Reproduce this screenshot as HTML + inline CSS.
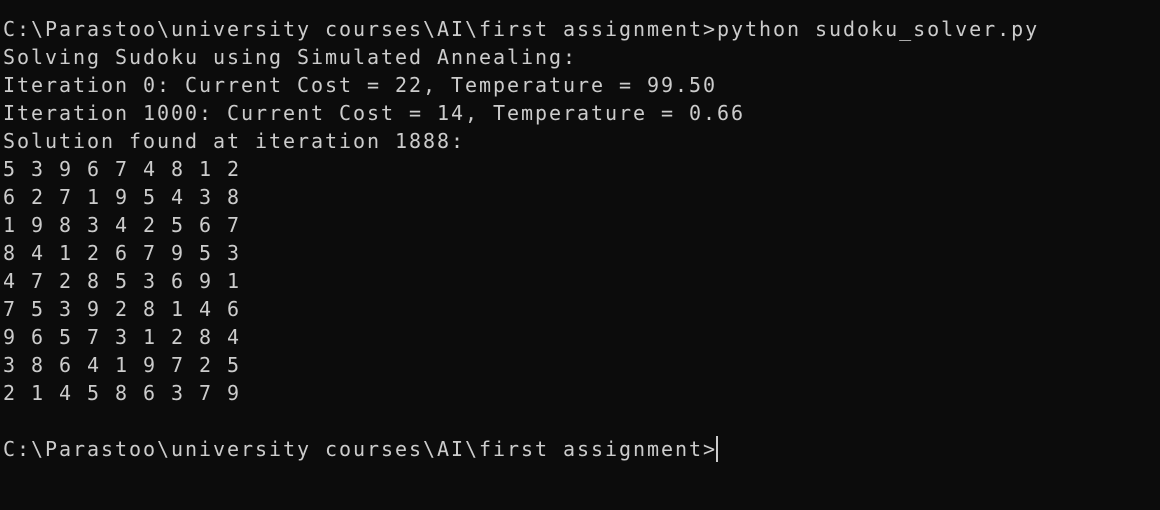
<!DOCTYPE html>
<html><head><meta charset="utf-8"><style>
html,body{margin:0;padding:0;background:#0c0c0c;width:1160px;height:510px;overflow:hidden}
pre{margin:0;padding:15px 0 0 3px;font-family:"DejaVu Sans Mono",monospace;font-size:20px;letter-spacing:1.96px;line-height:28px;color:#cccccc}
.cur{display:inline-block;width:2px;height:26px;background:#cccccc;vertical-align:-6px;margin-left:-1px}
</style></head><body><pre>C:\Parastoo\university courses\AI\first assignment>python sudoku_solver.py
Solving Sudoku using Simulated Annealing:
Iteration 0: Current Cost = 22, Temperature = 99.50
Iteration 1000: Current Cost = 14, Temperature = 0.66
Solution found at iteration 1888:
5 3 9 6 7 4 8 1 2
6 2 7 1 9 5 4 3 8
1 9 8 3 4 2 5 6 7
8 4 1 2 6 7 9 5 3
4 7 2 8 5 3 6 9 1
7 5 3 9 2 8 1 4 6
9 6 5 7 3 1 2 8 4
3 8 6 4 1 9 7 2 5
2 1 4 5 8 6 3 7 9

C:\Parastoo\university courses\AI\first assignment><span class="cur"></span></pre></body></html>
